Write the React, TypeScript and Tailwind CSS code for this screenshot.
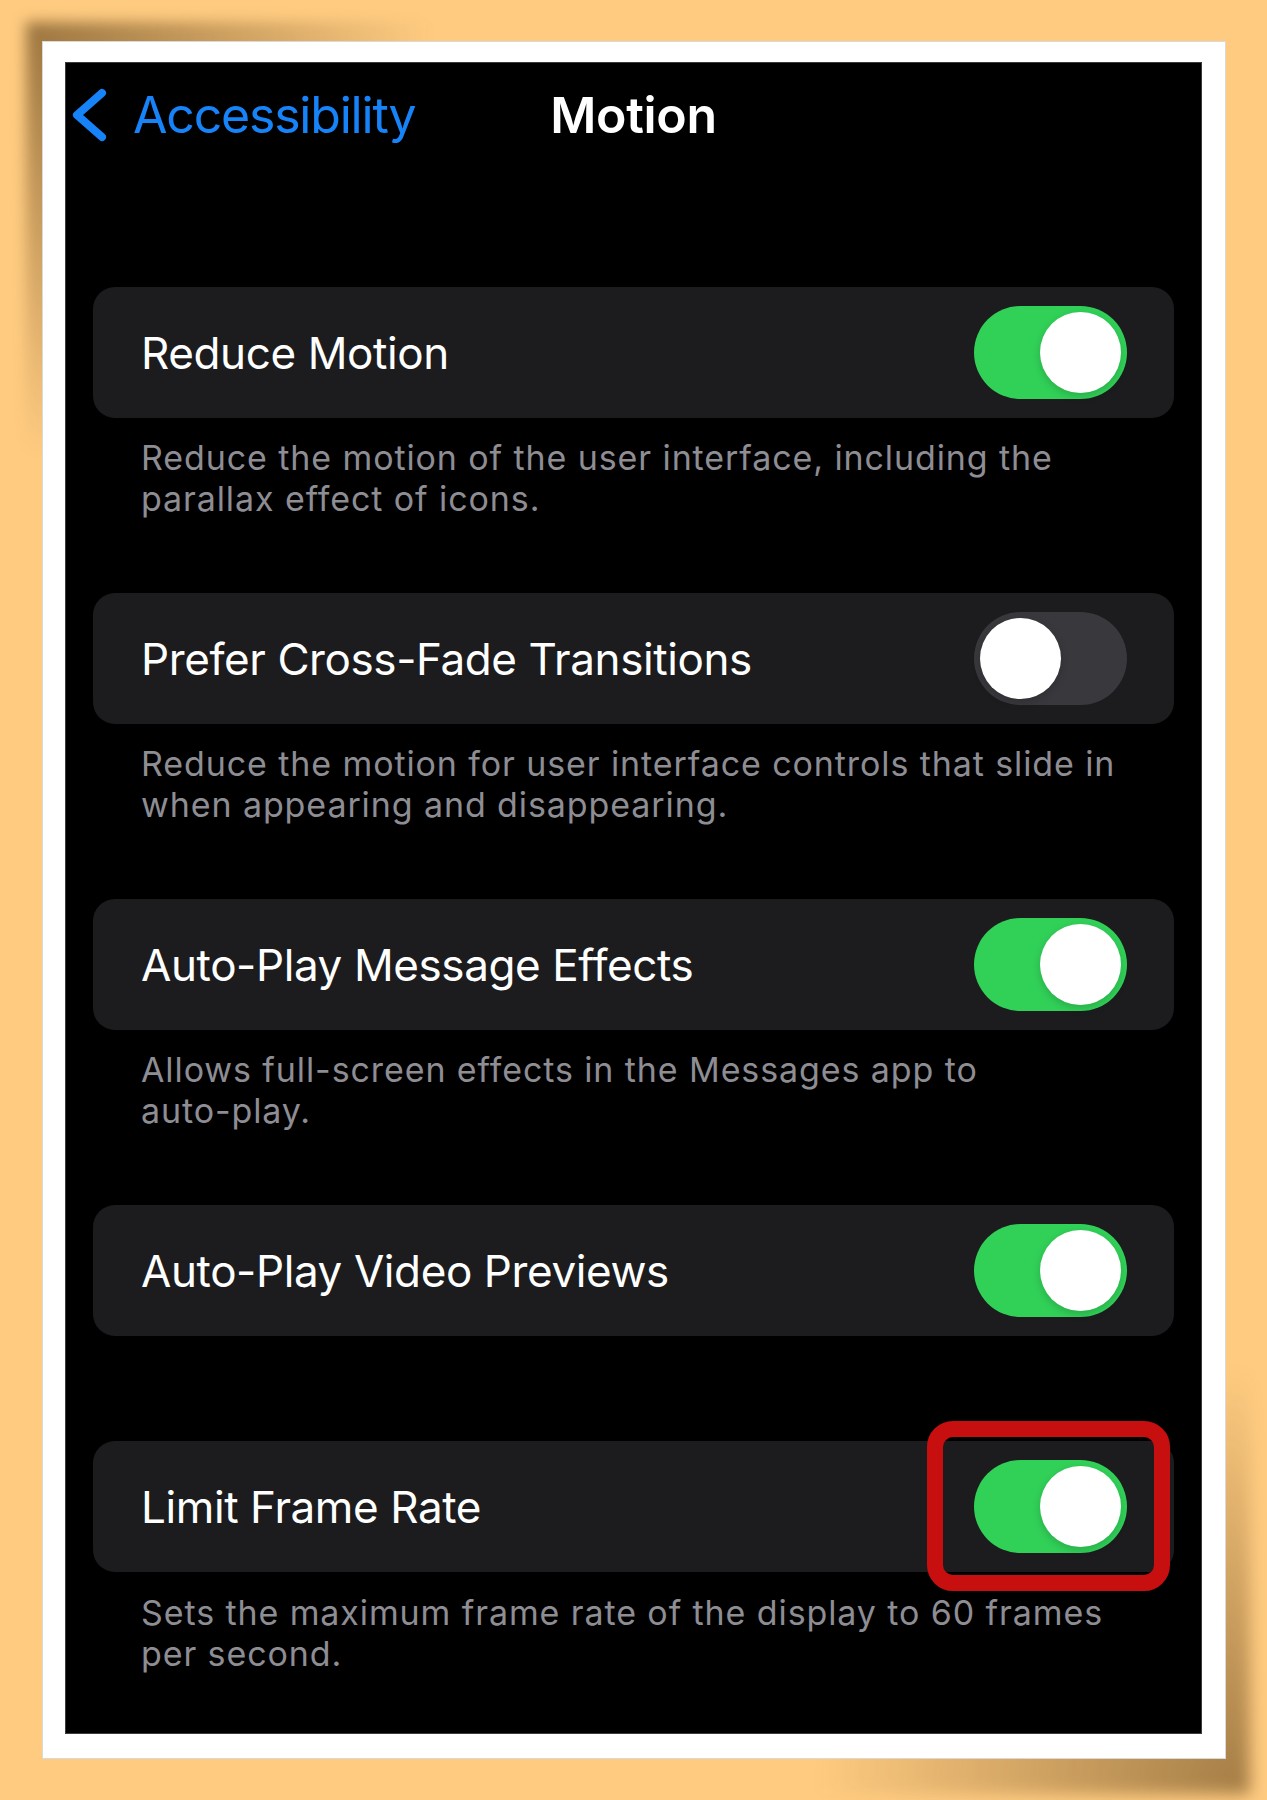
import React from "react";

function Toggle({ on }: { on: boolean }) {
  return (
    <div
      className={`flex items-center w-[153px] h-[93px] rounded-full p-[6px] shrink-0 ${
        on ? "bg-[#31D158] justify-end" : "bg-[#39393D] justify-start"
      }`}
    >
      <div className="w-[81px] h-[81px] rounded-full bg-white shadow-[0_3px_8px_rgba(0,0,0,0.18)]" />
    </div>
  );
}

function Card({ label, on, children }: { label: string; on: boolean; children?: React.ReactNode }) {
  return (
    <div className="relative flex items-center justify-between h-[131px] rounded-[22px] bg-[#1C1C1E] pl-[48px] pr-[47px]">
      <span className="text-[44px] leading-[52px] text-white tracking-[-0.4px]">{label}</span>
      <Toggle on={on} />
      {children}
    </div>
  );
}

function Desc({ children, mt = "mt-[19px]" }: { children: React.ReactNode; mt?: string }) {
  return (
    <p className={`${mt} pl-[48px] pr-[49px] text-[34px] leading-[41px] text-[#8D8D93] tracking-[0.9px]`}>
      {children}
    </p>
  );
}

export default function App() {
  return (
    <div className="relative w-[1267px] h-[1800px] bg-[#FECB81] pl-[42px] pt-[41px] [font-family:Inter,'Noto_Sans',sans-serif] overflow-hidden">
      {/* paper shadows */}
      <div className="absolute left-[26px] top-[22px] w-[440px] h-[470px] bg-[radial-gradient(ellipse_at_top_left,rgba(90,60,20,0.6),rgba(90,60,20,0)_65%)] blur-[7px]" />
      <div className="absolute left-[780px] top-[1330px] w-[470px] h-[464px] bg-[radial-gradient(ellipse_at_bottom_right,rgba(90,60,20,0.55),rgba(90,60,20,0)_65%)] blur-[8px]" />

      <div className="relative z-10 w-[1184px] h-[1718px] bg-white border border-[#d9d9d9] pl-[22px] pt-[20px]">
        <div className="w-[1137px] h-[1672px] bg-black border border-[#3c3c3c] flex flex-col">
          {/* nav */}
          <div className="relative mt-[22px] h-[60px] grid grid-cols-[1fr_auto_1fr] items-center">
            <div className="flex items-center">
              <svg width="40" height="60" viewBox="0 0 40 60" className="ml-[2px] shrink-0">
                <polyline
                  points="34,8 9,30 34,52"
                  fill="none"
                  stroke="#1683F8"
                  strokeWidth="8"
                  strokeLinecap="round"
                  strokeLinejoin="round"
                />
              </svg>
              <span className="ml-[25px] text-[50px] leading-[60px] text-[#1683F8] tracking-[-1.2px]">Accessibility</span>
            </div>
            <span className="text-[50px] leading-[60px] text-white font-semibold tracking-[-0.3px]">Motion</span>
            <div />
          </div>

          <div className="px-[27px] mt-[142px] flex flex-col">
            <Card label="Reduce Motion" on />
            <Desc>Reduce the motion of the user interface, including the parallax effect of icons.</Desc>

            <div className="mt-[74px]">
              <Card label="Prefer Cross-Fade Transitions" on={false} />
            </div>
            <Desc>Reduce the motion for user interface controls that slide in when appearing and disappearing.</Desc>

            <div className="mt-[74px]">
              <Card label="Auto-Play Message Effects" on />
            </div>
            <Desc>
              Allows full-screen effects in the Messages app to <span className="whitespace-nowrap">auto-play.</span>
            </Desc>

            <div className="mt-[74px]">
              <Card label="Auto-Play Video Previews" on />
            </div>

            <div className="mt-[105px]">
              <Card label="Limit Frame Rate" on>
                <div className="absolute left-[834px] top-[-20px] w-[243px] h-[170px] border-[16px] border-[#C80F0F] rounded-[26px]" />
              </Card>
            </div>
            <Desc mt="mt-[20px]">Sets the maximum frame rate of the display to 60 frames per second.</Desc>
          </div>
        </div>
      </div>
    </div>
  );
}
